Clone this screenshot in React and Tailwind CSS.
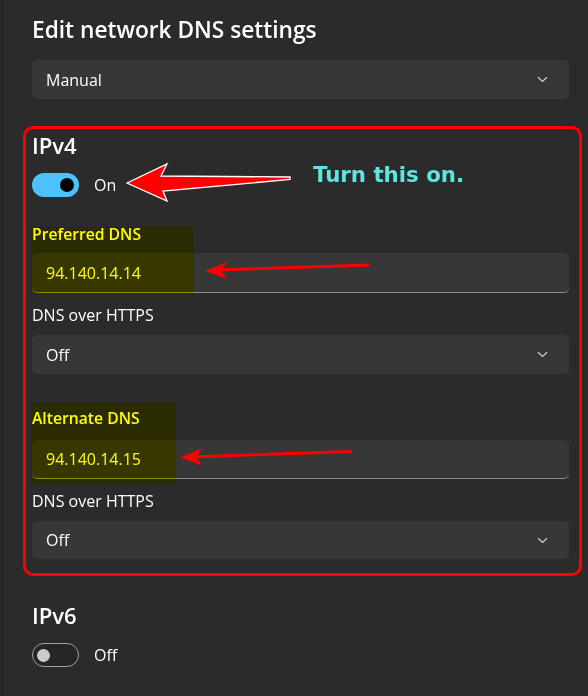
import React from "react";

const Chevron = () => (
  <svg width="11" height="7" viewBox="0 0 11 7" fill="none">
    <path d="M1 1.2 L5.5 5.5 L10 1.2" stroke="#d0d0d0" strokeWidth="1.2" />
  </svg>
);

const Dropdown = ({ value, className = "" }) => (
  <div
    className={
      "flex items-center justify-between rounded-[5px] bg-[#373737] pl-[14px] pr-[21px] text-[16px] text-white " +
      className
    }
  >
    <span>{value}</span>
    <Chevron />
  </div>
);

const TextBox = ({ value, className = "" }) => (
  <div
    className={
      "flex items-center rounded-[5px] border-b border-[#8e8e8e] bg-[#373737] pl-[14px] text-[16px] text-[#ffff00] " +
      className
    }
  >
    {value}
  </div>
);

const Toggle = ({ on, label, className = "" }) => (
  <div className={"flex items-center gap-[15px] " + className}>
    {on ? (
      <div className="flex h-[24px] w-[47px] items-center justify-end rounded-full bg-[#4cc2ff] pr-[5px]">
        <div className="h-[14px] w-[14px] rounded-full bg-black" />
      </div>
    ) : (
      <div className="flex h-[24px] w-[47px] items-center rounded-full border border-[#a3a3a3] bg-[#262626] pl-[4px]">
        <div className="h-[13px] w-[13px] rounded-full bg-[#cccccc]" />
      </div>
    )}
    <span className="text-[16px] text-white">{label}</span>
  </div>
);

export default function App() {
  return (
    <div
      className="relative flex h-[696px] w-[588px] overflow-hidden bg-[#2b2b2b]"
      style={{ fontFamily: '"Open Sans", "Noto Sans", sans-serif' }}
    >
      <div className="w-[2px] bg-[#292929]" />
      <div className="w-[1px] bg-[#1d1d1d]" />

      <div className="flex flex-1 flex-col pl-[20px] pr-[6px]">
        <div className="ml-[9px] mr-[13px]">
          <h1 className="mt-[15px] h-[30px] text-[22.7px] leading-[30px] font-semibold text-white">
            Edit network DNS settings
          </h1>
          <Dropdown value="Manual" className="mt-[15px] h-[39px]" />
        </div>

        <section className="mt-[27px] rounded-[10px] border-[3px] border-[#ff0000] pt-[1px] pb-[14px] pl-[6px] pr-[10px]">
          <h2 className="h-[30px] text-[22px] leading-[30px] font-semibold text-white">
            IPv4
          </h2>
          <Toggle on label="On" className="mt-[13px]" />

          <div className="mt-[27px] h-[20px] text-[15.7px] leading-[20px] font-semibold text-[#ffff00]">
            Preferred DNS
          </div>
          <TextBox value="94.140.14.14" className="mt-[9px] h-[40px]" />

          <div className="mt-[12px] h-[20px] text-[16px] leading-[20px] text-white">
            DNS over HTTPS
          </div>
          <Dropdown value="Off" className="mt-[10px] h-[39px]" />

          <div className="mt-[34px] h-[20px] text-[15.7px] leading-[20px] font-semibold text-[#ffff00]">
            Alternate DNS
          </div>
          <TextBox value="94.140.14.15" className="mt-[12px] h-[39px]" />

          <div className="mt-[12px] h-[20px] text-[16px] leading-[20px] text-white">
            DNS over HTTPS
          </div>
          <Dropdown value="Off" className="mt-[10px] h-[38px]" />
        </section>

        <div className="ml-[9px]">
          <h2 className="mt-[24px] h-[30px] text-[22px] leading-[30px] font-semibold text-white">
            IPv6
          </h2>
          <Toggle label="Off" className="mt-[13px]" />
        </div>
      </div>

      {/* highlighter marks */}
      <div className="pointer-events-none absolute left-[31px] top-[227px] h-[67px] w-[163px] bg-[#ffff00] mix-blend-multiply" />
      <div className="pointer-events-none absolute left-[31px] top-[403px] h-[81px] w-[145px] bg-[#ffff00] mix-blend-multiply" />

      {/* annotation */}
      <div
        className="absolute left-[313px] top-[160px] text-[21.3px] leading-[30px] font-bold text-[#5ce6de]"
        style={{ fontFamily: '"DejaVu Sans", sans-serif' }}
      >
        Turn this on.
      </div>

      <svg
        className="pointer-events-none absolute left-0 top-0"
        width="588"
        height="696"
        viewBox="0 0 588 696"
      >
        <polygon
          points="127,183 167,164 161,176 290,177 290,179.5 163,191 167,201"
          fill="#ff0000"
          stroke="#ffffff"
          strokeWidth="1.3"
          strokeLinejoin="miter"
        />
        <line x1="369" y1="265" x2="215" y2="270" stroke="#ff0000" strokeWidth="3" />
        <polygon points="205,271 227,262 221,270.5 227,279" fill="#ff0000" />
        <line x1="352" y1="451.5" x2="190" y2="457" stroke="#ff0000" strokeWidth="3" />
        <polygon points="180,457.5 202,448.5 196,457 202,465.5" fill="#ff0000" />
      </svg>
    </div>
  );
}
